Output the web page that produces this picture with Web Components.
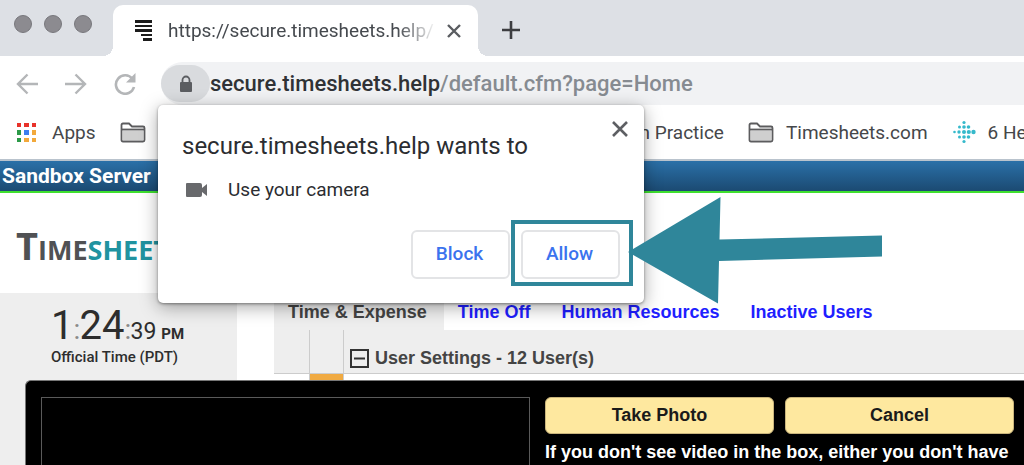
<!DOCTYPE html>
<html lang="en">

<head>
    <meta charset="utf-8">
    <title>Timesheets</title>
    <style>
        body {
            margin: 0;
            font-family: Roboto, "Liberation Sans", sans-serif;
            overflow: hidden;
        }
    </style>
</head>

<body>
    <browser-window>
        <tab-strip slot="chrome">https://secure.timesheets.help/</tab-strip>
        <address-bar slot="chrome" domain="secure.timesheets.help" path="/default.cfm?page=Home"></address-bar>
        <bookmarks-bar slot="chrome"></bookmarks-bar>
        <timesheets-page></timesheets-page>
        <permission-prompt slot="overlay">secure.timesheets.help wants to</permission-prompt>
        <pointer-arrow slot="overlay"></pointer-arrow>
    </browser-window>

    <script>
        class BaseElement extends HTMLElement {
            constructor() {
                super();
                this.attachShadow({ mode: 'open' });
            }

            connectedCallback() {
                this.shadowRoot.innerHTML = this.render();
            }
        }

        class BrowserWindow extends BaseElement {
            render() {
                return `
                <style>
                    :host {
                        display: flex;
                        flex-direction: column;
                        position: relative;
                        height: 100vh;
                        overflow: hidden;
                        background: #fff;
                    }
                    main {
                        flex: 1;
                        min-height: 0;
                    }
                </style>
                <slot name="chrome"></slot>
                <main><slot></slot></main>
                <slot name="overlay"></slot>
                `;
            }
        }

        class TabStrip extends BaseElement {
            render() {
                return `
                <style>
                    :host {
                        display: flex;
                        align-items: flex-end;
                        height: 56px;
                        background: #dde0e5;
                        color: #45494e;
                        font-size: 19px;
                    }
                    .lights {
                        display: flex;
                        align-self: flex-start;
                        gap: 12px;
                        padding: 15px 21px 0 14px;
                    }
                    .lights i {
                        box-sizing: border-box;
                        width: 18px;
                        height: 18px;
                        border: 1px solid #77777c;
                        border-radius: 50%;
                        background: #8c8b90;
                    }
                    .tab {
                        display: flex;
                        align-items: center;
                        box-sizing: border-box;
                        width: 365px;
                        height: 51px;
                        padding: 0 17px 0 22px;
                        border-radius: 10px 10px 0 0;
                        background: #fff;
                        position: relative;
                    }
                    .tab::before, .tab::after {
                        content: "";
                        position: absolute;
                        bottom: 0;
                        width: 10px;
                        height: 10px;
                    }
                    .tab::before {
                        left: -10px;
                        background: radial-gradient(circle at 0 0, transparent 10px, #fff 10px);
                    }
                    .tab::after {
                        right: -10px;
                        background: radial-gradient(circle at 100% 0, transparent 10px, #fff 10px);
                    }
                    .title {
                        flex: 1;
                        margin-left: 16px;
                        overflow: hidden;
                        white-space: nowrap;
                        -webkit-mask-image: linear-gradient(to left, transparent, #000 40px);
                        mask-image: linear-gradient(to left, transparent, #000 40px);
                    }
                    button {
                        display: flex;
                        padding: 0;
                        border: 0;
                        background: none;
                    }
                    .tab button {
                        margin-left: 10px;
                    }
                    .add {
                        align-self: center;
                        margin: 4px 0 0 24px;
                    }
                </style>
                <div class="lights"><i></i><i></i><i></i></div>
                <div class="tab">
                    <svg width="17" height="22" fill="#1c1c1c">
                        <path d="M0 0h17v3H0zM0 5h17v2H0zM0 9h17v3H0zM6 14h11v2H6zM8 18h9v3H8z"/>
                    </svg>
                    <span class="title"><slot></slot></span>
                    <button aria-label="Close tab">
                        <svg width="14" height="14" stroke="#5a5d61" stroke-width="2.4"><path d="M1 1l12 12M13 1L1 13"/></svg>
                    </button>
                </div>
                <button class="add" aria-label="New tab">
                    <svg width="18" height="18" stroke="#3c3d40" stroke-width="2.6"><path d="M9 0v18M0 9h18"/></svg>
                </button>
                `;
            }
        }

        class AddressBar extends BaseElement {
            render() {
                return `
                <style>
                    :host {
                        display: flex;
                        align-items: center;
                        padding-top: 6px;
                        font-size: 22px;
                        font-weight: 500;
                    }
                    nav {
                        display: flex;
                        gap: 27px;
                        padding: 0 25px 0 16px;
                    }
                    button {
                        display: flex;
                        padding: 0;
                        border: 0;
                        background: none;
                    }
                    .omnibox {
                        display: flex;
                        align-items: center;
                        flex: 1;
                        height: 43px;
                        border-radius: 22px 0 0 22px;
                        background: #f1f2f4;
                        color: #868b91;
                        white-space: nowrap;
                    }
                    .lock {
                        align-items: center;
                        justify-content: center;
                        width: 49px;
                        height: 37px;
                        border-radius: 19px;
                        background: #d9dbde;
                    }
                    b {
                        font-weight: 500;
                        color: #303236;
                    }
                </style>
                <nav>
                    <button aria-label="Back">
                        <svg width="22" height="22" fill="none" stroke="#b4b6b8" stroke-width="2.4"><path d="M22 11H2M11.500 1.500L2 11l9.500 9.500"/></svg>
                    </button>
                    <button aria-label="Forward">
                        <svg width="22" height="22" fill="none" stroke="#b4b6b8" stroke-width="2.4"><path d="M0 11h20M10.500 1.500L20 11l-9.500 9.500"/></svg>
                    </button>
                    <button aria-label="Reload">
                        <svg width="22" height="22" fill="none" stroke="#b4b6b8" stroke-width="2.600"><path d="M18.500 6A9.200 9.200 0 1 0 20 14"/><path d="M21.500 0v9.500H12z" fill="#b4b6b8" stroke="none"/></svg>
                    </button>
                </nav>
                <div class="omnibox">
                    <button class="lock" aria-label="View site information">
                        <svg width="14" height="18"><path d="M3.500 8V5a3.500 3.500 0 0 1 7 0v3" fill="none" stroke="#5b5d61" stroke-width="1.800"/><rect x="1" y="7" width="12" height="10" rx="1" fill="#5b5d61"/></svg>
                    </button>
                    <span><b>${this.getAttribute('domain')}</b>${this.getAttribute('path')}</span>
                </div>
                `;
            }
        }

        class BookmarksBar extends BaseElement {
            render() {
                const folder = `
                <svg width="26" height="21">
                    <path d="M1.500 18V3q0-1.500 1.500-1.500h6l3 3h11q1.500 0 1.500 1.500v12q0 1.500-1.500 1.500H3q-1.500 0-1.500-1.500z" fill="#fff" stroke="#5c5c5e" stroke-width="1.800"/>
                    <path d="M3 8.500h20V18H3z" fill="#cfcfcf"/><path d="M2 7.500h22" stroke="#5c5c5e" stroke-width="1.800"/>
                </svg>`;
                return `
                <style>
                    :host {
                        display: flex;
                        align-items: center;
                        height: 54px;
                        padding-left: 16px;
                        overflow: hidden;
                        white-space: nowrap;
                        font-size: 19px;
                    }
                    a {
                        display: flex;
                        flex-shrink: 0;
                        align-items: center;
                        gap: 12px;
                        margin-right: 24px;
                        color: #45474a;
                        text-decoration: none;
                    }
                    a.apps {
                        gap: 15px;
                    }
                    /* these bookmarks run on beneath the permission prompt */
                    a.wide {
                        width: 496px;
                    }
                </style>
                <a class="apps" href="#">
                    <svg width="21" height="21">
                        <path d="M1 1h4v4H1zM8 1h5v4H8zM16 1h4v4h-4z" fill="#e8322a"/>
                        <path d="M1 8h4v5H1zM1 16h4v4H1z" fill="#2c9a48"/>
                        <path d="M8 8h5v5H8z" fill="#3c7ff0"/>
                        <path d="M16 8h4v5h-4zM8 16h5v4H8zM16 16h4v4h-4z" fill="#f2a93b"/>
                    </svg>
                    Apps
                </a>
                <a class="wide" href="#" aria-label="Folder">${folder}</a>
                <a href="#">n Practice</a>
                <a href="#">${folder}Timesheets.com</a>
                <a href="#">
                    <svg width="24" height="24" fill="#35b9cb">
                        <circle cx="12" cy="2.500" r="1.600"/>
                        <circle cx="7.500" cy="7" r="1.500"/><circle cx="12" cy="7" r="1.800"/><circle cx="16.500" cy="7" r="1.800"/>
                        <circle cx="2.500" cy="12" r="1.300"/><circle cx="7" cy="12" r="1.700"/><circle cx="12" cy="12" r="2"/><circle cx="16.800" cy="12" r="2.100"/><circle cx="21.500" cy="12" r="2.200"/>
                        <circle cx="7.500" cy="17" r="1.500"/><circle cx="12" cy="17" r="1.800"/><circle cx="16.500" cy="17" r="1.800"/>
                        <circle cx="12" cy="21.500" r="1.600"/>
                    </svg>
                    6 He
                </a>
                `;
            }
        }

        class TimesheetsPage extends BaseElement {
            render() {
                return `
                <style>
                    :host {
                        display: flex;
                        flex-direction: column;
                        height: 100%;
                        font-family: "Liberation Sans", Arial, sans-serif;
                        font-size: 18px;
                    }
                    .banner {
                        flex: none;
                        height: 30px;
                        padding-left: 2px;
                        border-top: 2px solid #b9c3cd;
                        border-bottom: 2px solid #3fe02f;
                        background: linear-gradient(#2a70a8, #1b4a72);
                        color: #fff;
                        font: 700 21px/30px Roboto, sans-serif;
                    }
                    header {
                        display: flex;
                        flex: none;
                        align-items: center;
                        height: 100px;
                        padding: 8px 0 0 16px;
                        box-sizing: border-box;
                        color: #505154;
                        font: 700 27px/40px "Open Sans", sans-serif;
                    }
                    header big {
                        font-size: 38px;
                    }
                    header span {
                        color: #2093a0;
                    }
                    .body {
                        display: flex;
                        flex: 1;
                        gap: 37px;
                    }
                    .body > section {
                        flex: 1;
                    }
                </style>
                <div class="banner">Sandbox Server</div>
                <header><div><big>T</big>IME<span>SHEETS</span></div></header>
                <div class="body">
                    <time-clock></time-clock>
                    <section>
                        <section-tabs></section-tabs>
                        <user-settings></user-settings>
                    </section>
                </div>
                <camera-dialog></camera-dialog>
                `;
            }
        }

        class TimeClock extends BaseElement {
            render() {
                return `
                <style>
                    :host {
                        box-sizing: border-box;
                        width: 237px;
                        padding: 13px 0 0 51px;
                        background: #eee;
                        color: #2d2d2d;
                        font: 500 15px/22px Roboto, sans-serif;
                    }
                    .time {
                        display: flex;
                        align-items: baseline;
                        height: 40px;
                        font-size: 40px;
                        font-weight: 400;
                        line-height: 40px;
                    }
                    small {
                        font-size: 23px;
                    }
                    i {
                        width: 6px;
                        color: #8a8a8a;
                        font-size: 28px;
                        font-style: normal;
                    }
                    b {
                        margin-left: 5px;
                        font-size: 15px;
                    }
                </style>
                <div class="time">1<i>:</i>24<i>:</i><small>39</small><b>PM</b></div>
                <div>Official Time (PDT)</div>
                `;
            }
        }

        class SectionTabs extends BaseElement {
            render() {
                return `
                <style>
                    :host {
                        display: flex;
                        height: 37px;
                        line-height: 38px;
                        font-weight: 700;
                        white-space: nowrap;
                    }
                    a {
                        padding: 0 17px 0 14px;
                        color: #1f1fff;
                        text-decoration: none;
                    }
                    a.active {
                        background: #eee;
                        color: #444;
                    }
                </style>
                <a class="active" href="#">Time &amp; Expense</a>
                <a href="#">Time Off</a>
                <a href="#">Human Resources</a>
                <a href="#">Inactive Users</a>
                `;
            }
        }

        class UserSettings extends BaseElement {
            render() {
                return `
                <style>
                    table {
                        width: 100%;
                        border-collapse: collapse;
                        color: #444;
                        font-size: 18px;
                    }
                    th, td {
                        height: 43px;
                        padding: 0;
                        border-right: 1px solid #ccc;
                        text-align: left;
                    }
                    th {
                        border-bottom: 1px solid #ccc;
                        background: #eee;
                    }
                    th:last-child, td:last-child {
                        border-right: 0;
                    }
                    .narrow {
                        width: 35px;
                    }
                    .toggle {
                        width: 33px;
                    }
                    .flag {
                        background: #f0aa42;
                    }
                    .title {
                        display: flex;
                        align-items: center;
                        gap: 6px;
                        padding: 14px 0 0 6px;
                    }
                    button {
                        display: flex;
                        padding: 0;
                        border: 0;
                        background: none;
                    }
                </style>
                <table>
                    <tr>
                        <th class="narrow"></th>
                        <th class="toggle"></th>
                        <th><div class="title">
                            <button aria-label="Collapse"><svg width="19" height="19" fill="none" stroke="#333" stroke-width="2"><path d="M1 1h17v17H1zM4 9.500h11"/></svg></button>
                            User Settings - 12 User(s)
                        </div></th>
                    </tr>
                    <tr><td></td><td class="flag"></td><td></td></tr>
                </table>
                `;
            }
        }

        class CameraDialog extends BaseElement {
            render() {
                return `
                <style>
                    :host {
                        display: grid;
                        grid-template-columns: 489px 1fr;
                        gap: 15px;
                        position: absolute;
                        top: 380px;
                        right: 0;
                        bottom: 0;
                        left: 25px;
                        padding: 16px 10px 0 15px;
                        border-top: 1px solid #777;
                        border-left: 1px solid #777;
                        border-top-left-radius: 6px;
                        background: #000;
                        color: #fff;
                        font-weight: 700;
                    }
                    .video {
                        border: 1px solid #5a5a5a;
                        border-bottom: 0;
                        box-sizing: border-box;
                    }
                    .buttons {
                        display: grid;
                        grid-template-columns: 1fr 1fr;
                        gap: 11px;
                    }
                    button {
                        height: 37px;
                        border: 1px solid #c9b47c;
                        border-radius: 6px;
                        background: #fee89f;
                        color: #1a1a1a;
                        font: inherit;
                    }
                    p {
                        margin: 7px 0 0;
                        line-height: 22px;
                        white-space: nowrap;
                    }
                </style>
                <div class="video"></div>
                <div>
                    <div class="buttons"><button>Take Photo</button><button>Cancel</button></div>
                    <p>If you don't see video in the box, either you don't have</p>
                </div>
                `;
            }
        }

        class PermissionPrompt extends BaseElement {
            render() {
                return `
                <style>
                    :host {
                        display: flex;
                        flex-direction: column;
                        position: absolute;
                        top: 105px;
                        left: 158px;
                        box-sizing: border-box;
                        width: 486px;
                        height: 198px;
                        padding: 16px 24px 24px;
                        border-radius: 5px;
                        background: #fff;
                        box-shadow: 0 1px 3px rgba(0, 0, 0, 0.4), 0 4px 18px rgba(0, 0, 0, 0.35);
                        color: #2b2d31;
                        font-size: 19px;
                    }
                    h2 {
                        margin: 10px 0 0;
                        font-size: 24px;
                        font-weight: 400;
                        line-height: 30px;
                    }
                    .head {
                        display: flex;
                        align-items: flex-start;
                        justify-content: space-between;
                    }
                    .request {
                        display: flex;
                        align-items: center;
                        gap: 21px;
                        margin: 18px 0 0 4px;
                        line-height: 22px;
                    }
                    .actions {
                        display: flex;
                        justify-content: flex-end;
                        gap: 11px;
                        margin-top: auto;
                    }
                    button {
                        width: 99px;
                        height: 49px;
                        padding: 0 2px 2px 0;
                        border: 2px solid #e3e4e6;
                        border-radius: 6px;
                        background: #fff;
                        color: #3b73ee;
                        font: 500 19px Roboto, sans-serif;
                    }
                    .close {
                        display: flex;
                        width: 16px;
                        height: 16px;
                        margin-right: -8px;
                        padding: 0;
                        border: 0;
                    }
                    .allow {
                        position: relative;
                    }
                    .allow::after {
                        content: "";
                        position: absolute;
                        inset: -12px -15px -9px -12px;
                        border: 4px solid #2f869a;
                    }
                </style>
                <div class="head">
                    <h2><slot></slot></h2>
                    <button class="close" aria-label="Close">
                        <svg width="16" height="16" stroke="#5d5f63" stroke-width="2.600"><path d="M1 1l14 14M15 1L1 15"/></svg>
                    </button>
                </div>
                <div class="request">
                    <svg width="21" height="14" fill="#68696c"><path d="M1 0h13q2 0 2 2v3l5-4v12l-5-4v3q0 2-2 2H1q-1 0-1-1V1q0-1 1-1z"/></svg>
                    Use your camera
                </div>
                <div class="actions">
                    <button>Block</button>
                    <button class="allow">Allow</button>
                </div>
                `;
            }
        }

        class PointerArrow extends BaseElement {
            render() {
                return `
                <style>
                    :host {
                        display: block;
                        position: absolute;
                        top: 197px;
                        left: 628px;
                        pointer-events: none;
                    }
                    svg {
                        display: block;
                    }
                </style>
                <svg width="254" height="107" fill="#2f869a"><path d="M0 55L92.500 0L91.500 42.500L254 38.500V59.500L91 64L90 106.500z"/></svg>
                `;
            }
        }

        customElements.define('browser-window', BrowserWindow);
        customElements.define('tab-strip', TabStrip);
        customElements.define('address-bar', AddressBar);
        customElements.define('bookmarks-bar', BookmarksBar);
        customElements.define('timesheets-page', TimesheetsPage);
        customElements.define('time-clock', TimeClock);
        customElements.define('section-tabs', SectionTabs);
        customElements.define('user-settings', UserSettings);
        customElements.define('camera-dialog', CameraDialog);
        customElements.define('permission-prompt', PermissionPrompt);
        customElements.define('pointer-arrow', PointerArrow);
    </script>
</body>

</html>
